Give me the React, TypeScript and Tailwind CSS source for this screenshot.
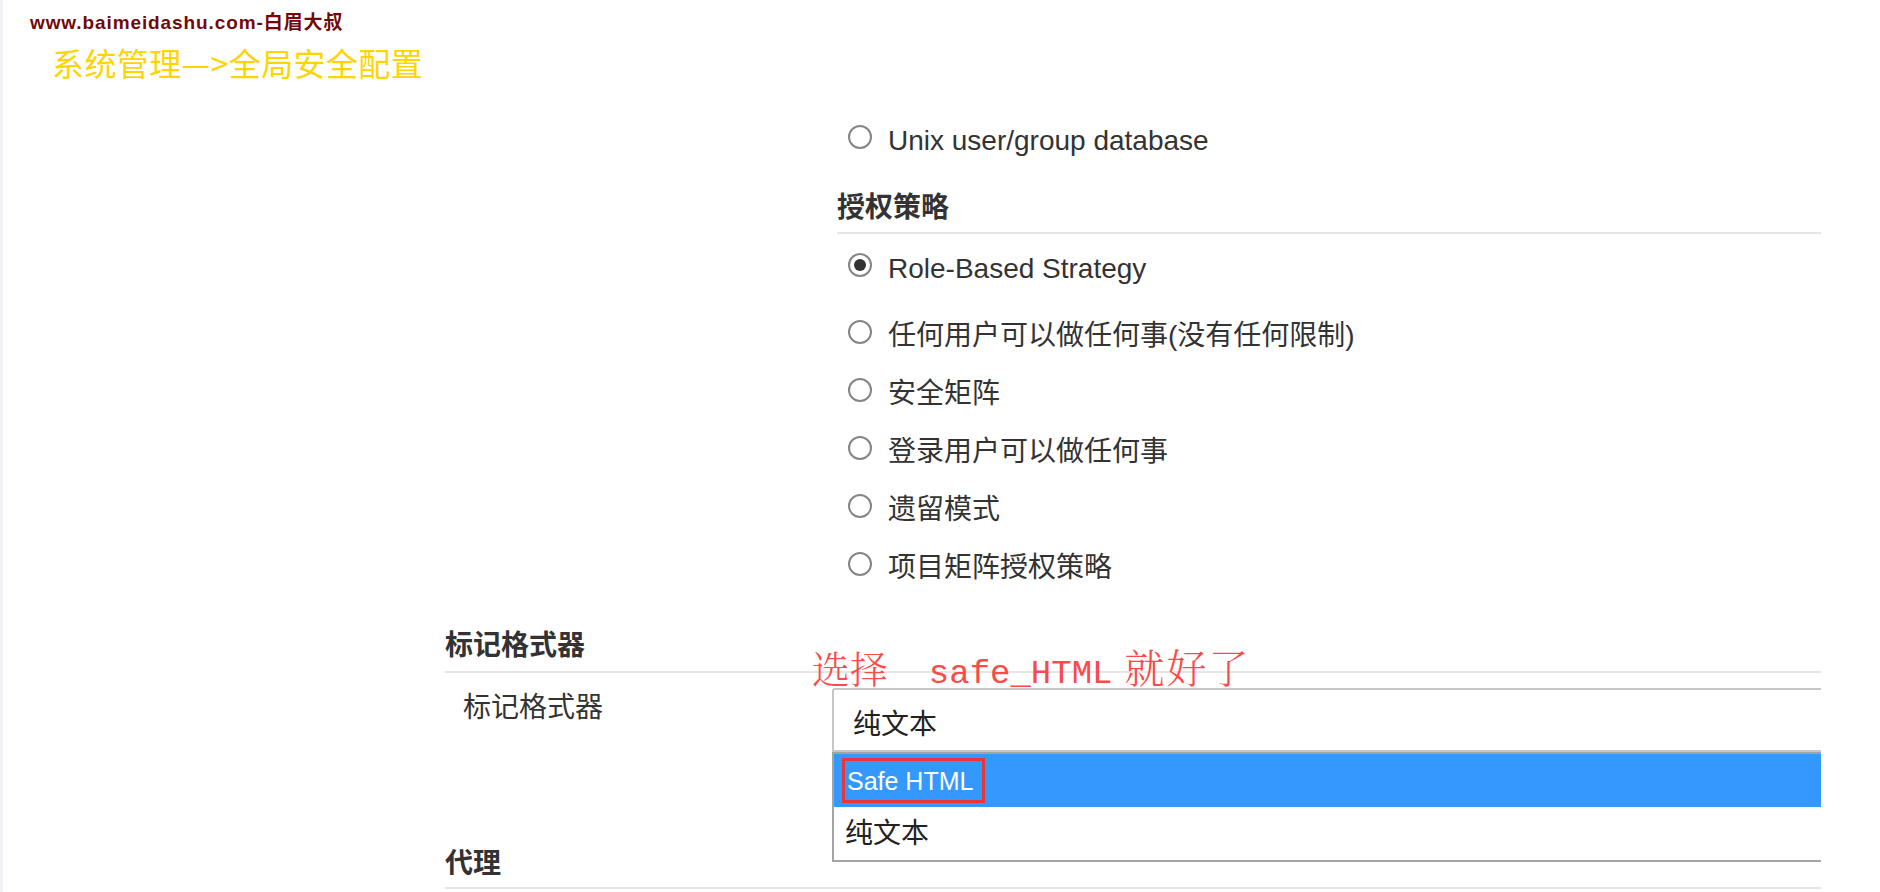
import React from "react";

function Radio({ checked }: { checked?: boolean }) {
  return (
    <span className="w-[24px] h-[24px] rounded-full border-2 border-[#858585] bg-white flex items-center justify-center shrink-0">
      {checked && <span className="w-[12px] h-[12px] rounded-full bg-[#333]" />}
    </span>
  );
}

function RadioRow({ label, checked, h }: { label: string; checked?: boolean; h: string }) {
  return (
    <div className={`flex items-center gap-[16px] pl-[11px] ${h}`}>
      <Radio checked={checked} />
      <span className="mt-[8px] text-[28px] leading-[36px] text-[#333] whitespace-nowrap">{label}</span>
    </div>
  );
}

export default function App() {
  const cjkRows = ["任何用户可以做任何事(没有任何限制)", "安全矩阵", "登录用户可以做任何事", "遗留模式", "项目矩阵授权策略"];
  return (
    <div className="w-[1880px] h-[892px] bg-white overflow-hidden flex font-['Liberation_Sans','Noto_Sans_CJK_SC',sans-serif] text-[#333]">
      <div className="w-[3px] shrink-0 bg-[#f1f2f5]" />
      <div className="flex-1 flex flex-col">
        <div className="h-[117px] pl-[27px] pt-[13px] shrink-0">
          <div className="text-[19px] leading-[20px] font-bold text-[#730808] tracking-[0.9px] whitespace-nowrap">
            www.baimeidashu.com-白眉大叔
          </div>
          <div className="mt-[9px] pl-[22px] text-[32px] leading-[40px] tracking-[0.4px] text-[#ffd400] font-['Noto_Sans_CJK_SC',sans-serif] whitespace-nowrap">
            系统管理—&gt;全局安全配置
          </div>
        </div>

        <div className="ml-[442px] w-[1376px] relative overflow-hidden">
          <div className="pl-[392px]">
            <RadioRow label="Unix user/group database" h="h-[40px]" />
            <div className="mt-[33px] pb-[6px] border-b-2 border-[#e6e6e6]">
              <div className="h-[36px] text-[28px] leading-[36px] font-bold text-[#333]">授权策略</div>
            </div>
            <div className="mt-[11px]">
              <RadioRow label="Role-Based Strategy" checked h="h-[40px]" />
            </div>
            <div className="mt-[18px]">
              {cjkRows.map((r) => (
                <RadioRow key={r} label={r} h="h-[58px]" />
              ))}
            </div>
          </div>

          <div className="mt-[35px] pb-[7px] border-b-2 border-[#e6e6e6]">
            <div className="h-[36px] text-[28px] leading-[36px] font-bold text-[#333]">标记格式器</div>
          </div>

          <div className="flex">
            <div className="w-[387px] shrink-0 pt-[17px] pl-[18px] text-[28px] leading-[36px] text-[#333]">标记格式器</div>
            <div className="mt-[15px] relative flex-1 min-w-0">
              <div className="w-[1100px] h-[64px] border-2 border-[#c6c6c6] rounded-tl-[3px] bg-white flex items-center pt-[10px] pl-[19px] text-[28px] leading-[36px] text-[#222]">
                纯文本
              </div>
              <div className="absolute left-0 top-full w-[1100px] z-10 bg-white border-2 border-[#a3a3a3]">
                <div className="h-[53px] bg-[#3399ff] flex items-center pl-[8px]">
                  <span className="w-[143px] h-[45px] border-[3px] border-[#e8373c] flex items-center pl-[2px] text-white text-[25px] leading-[30px] whitespace-nowrap">
                    Safe HTML
                  </span>
                </div>
                <div className="h-[53px] flex items-center pl-[11px] text-[28px] leading-[36px] text-[#222]">纯文本</div>
              </div>
            </div>
          </div>

          <div className="mt-[94px] pb-[5px] border-b-2 border-[#e6e6e6]">
            <div className="h-[36px] text-[28px] leading-[36px] font-bold text-[#333]">代理</div>
          </div>

          <div className="absolute left-[367px] top-[528px] z-20 whitespace-pre text-[#fa4a4a] leading-[42px]">
            <span className="text-[38px] font-light font-['Noto_Serif_CJK_SC','Noto_Sans_CJK_SC',serif]">选择</span>
            <span className="text-[34px] font-['Liberation_Mono',monospace]">  safe_HTML</span>
            <span className="ml-[12px] text-[40px] tracking-[2px] font-light font-['Noto_Serif_CJK_SC','Noto_Sans_CJK_SC',serif]">就好了</span>
          </div>
        </div>
      </div>
    </div>
  );
}
